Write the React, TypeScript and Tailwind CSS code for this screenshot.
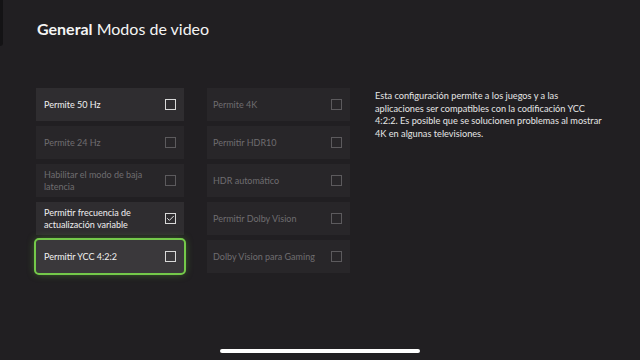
import { Check } from 'lucide-react';

type Row = { label: string; enabled: boolean; checked?: boolean; focused?: boolean };

const left: Row[] = [
  { label: 'Permite 50 Hz', enabled: true },
  { label: 'Permite 24 Hz', enabled: false },
  { label: 'Habilitar el modo de baja\nlatencia', enabled: false },
  { label: 'Permitir frecuencia de\nactualización variable', enabled: true, checked: true },
  { label: 'Permitir YCC 4:2:2', enabled: true, focused: true },
];

const right: Row[] = [
  { label: 'Permite 4K', enabled: false },
  { label: 'Permitir HDR10', enabled: false },
  { label: 'HDR automático', enabled: false },
  { label: 'Permitir Dolby Vision', enabled: false },
  { label: 'Dolby Vision para Gaming', enabled: false },
];

const Option = ({ row, pad }: { row: Row; pad: string }) => {
  const base = `flex h-[33px] items-center justify-between gap-1 ${pad} pr-[8px] text-[9px] leading-[12px]`;
  const tone = row.focused
    ? 'bg-[#3a383b] text-[#f2f2f2] outline-2 outline-[#74c94a] rounded-[3px] shadow-[0_0_8px_rgba(110,200,60,0.6)]'
    : row.enabled
      ? 'bg-[#2f2d30] text-[#f0f0f0]'
      : 'bg-[#282629] text-[#6f6d70]';
  return (
    <div className={`${base} ${tone}`}>
      <span className="whitespace-pre-line">{row.label}</span>
      <span
        className={`flex h-[11px] w-[11px] shrink-0 items-center justify-center border ${
          row.enabled ? 'border-[#d8d8d8]' : 'border-[#5c5a5d]'
        }`}
      >
        {row.checked && <Check size={9} strokeWidth={2.5} className="text-[#e8e8e8]" />}
      </span>
    </div>
  );
};

export default function App() {
  return (
    <div
      className="relative h-[360px] w-[640px] overflow-hidden bg-[#211f22] text-white"
      style={{ fontFamily: 'Lato, "Noto Sans", sans-serif' }}
    >
      <div className="absolute left-0 top-0 h-[46px] w-[3px] rounded-br-[3px] bg-[#141315]" />

      <div className="pl-[37px] pt-[16px]">
        <h1 className="text-[16px] leading-[26px] text-[#f4f4f4]">
          <span className="font-bold">General</span> Modos de video
        </h1>
      </div>

      <div className="mt-[46px] flex pl-[36px]">
        <div className="flex w-[148px] flex-col gap-[5px]">
          {left.map((r) => (
            <Option key={r.label} row={r} pad="pl-2" />
          ))}
        </div>
        <div className="ml-[23px] flex w-[143px] flex-col gap-[5px]">
          {right.map((r) => (
            <Option key={r.label} row={r} pad="pl-[6px]" />
          ))}
        </div>
        <p className="ml-[25px] mt-[2px] w-[230px] text-[9.2px] leading-[12.5px] text-[#e6e6e6]">
          Esta configuración permite a los juegos y a las aplicaciones ser compatibles con la
          codificación YCC 4:2:2. Es posible que se solucionen problemas al mostrar 4K en algunas
          televisiones.
        </p>
      </div>

      <div className="absolute bottom-[7px] left-[220px] h-[4px] w-[200px] rounded-full bg-white" />
    </div>
  );
}
